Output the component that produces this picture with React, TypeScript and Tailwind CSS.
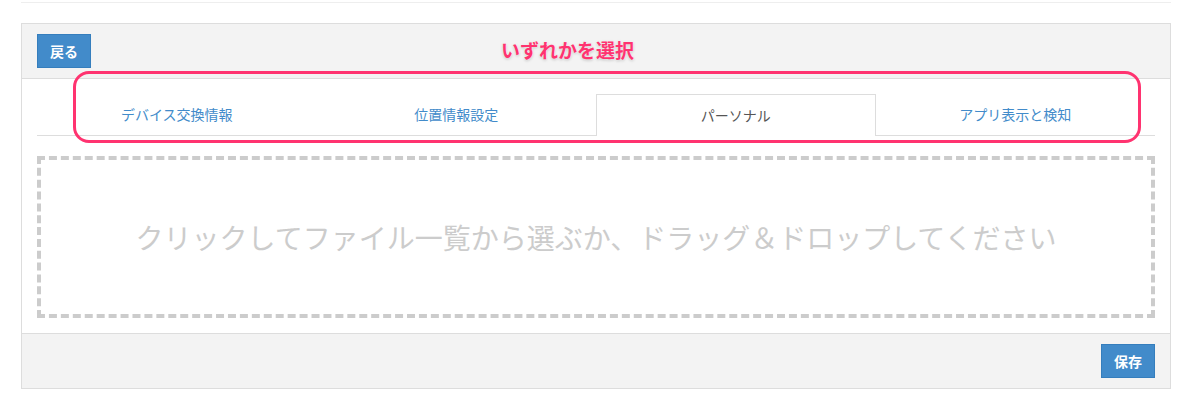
import React from 'react';

const tabs = ['デバイス交換情報', '位置情報設定', 'パーソナル', 'アプリ表示と検知'];
const activeIndex = 2;

export default function App() {
  return (
    <div className="w-[1190px] h-[401px] bg-white font-['Noto_Sans_CJK_JP','Noto_Sans',sans-serif] text-[14px] text-[#333]">
      {/* top divider */}
      <div className="ml-[21px] w-[1150px] pt-[2px] border-b border-[#eeeeee]" />

      {/* panel */}
      <div className="relative ml-[21px] mt-[20px] w-[1150px] border border-[#dddddd]">
        {/* header */}
        <div className="h-[55px] bg-[#f3f3f3] border-b border-[#dddddd] px-[15px] pt-[10px]">
          <button className="h-[34px] px-[12px] bg-[#428bca] border border-[#357ebd] text-white font-bold text-[14px] leading-none">
            戻る
          </button>
        </div>

        {/* body */}
        <div className="px-[15px] pt-[15px] pb-[15px]">
          <ul className="flex">
            {tabs.map((t, i) => (
              <li key={t} className="flex-1">
                <div
                  className={
                    i === activeIndex
                      ? 'h-[42px] flex items-center justify-center border border-b-0 border-[#dddddd] bg-white text-[#555555]'
                      : 'h-[42px] flex items-center justify-center border-b border-[#dddddd] text-[#428bca]'
                  }
                >
                  {t}
                </div>
              </li>
            ))}
          </ul>

          <div className="mt-[20px] h-[162px] border-[4px] border-dashed border-[#cccccc] flex items-center justify-center text-[28px] text-[#cccccc]">
            クリックしてファイル一覧から選ぶか、ドラッグ＆ドロップしてください
          </div>
        </div>

        {/* footer */}
        <div className="h-[55px] bg-[#f3f3f3] border-t border-[#dddddd] px-[15px] pt-[10px] flex justify-end">
          <button className="h-[34px] px-[12px] bg-[#428bca] border border-[#357ebd] text-white font-bold text-[14px] leading-none">
            保存
          </button>
        </div>

        {/* annotation overlay */}
        <div className="absolute left-[51px] top-[47px] w-[1068px] h-[72px] rounded-[16px] border-[3px] border-[#ff3370] pointer-events-none" />
        <div className="absolute left-[479px] top-[12px] text-[19px] font-bold text-[#ff3370] [text-shadow:0_0_2px_#fff,0_1px_3px_rgba(0,0,0,0.25)]">
          いずれかを選択
        </div>
      </div>
    </div>
  );
}
